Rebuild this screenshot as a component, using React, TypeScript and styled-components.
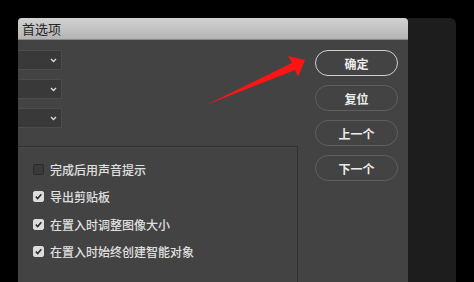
import React from 'react';
import styled, { createGlobalStyle } from 'styled-components';

const GlobalStyle = createGlobalStyle`
  html, body {
    margin: 0;
    padding: 0;
    background: #000;
  }
  body {
    font-family: "Noto Sans CJK SC", "Noto Sans", sans-serif;
  }
`;

const Screen = styled.div`
  position: relative;
  width: 474px;
  height: 282px;
  background: #000;
  display: flex;
  align-items: stretch;
  padding: 18px 0 0 18px;
  box-sizing: border-box;
  overflow: hidden;
`;

const Window = styled.div`
  width: 390px;
  display: flex;
  flex-direction: column;
  background: #434343;
  border-radius: 4px 4px 0 0;
  overflow: hidden;
`;

const Backdrop = styled.div`
  width: 48px;
  background: #1d1d1d;
  border-radius: 0 6px 0 0;
`;

const TitleBar = styled.div`
  height: 22px;
  flex: none;
  display: flex;
  align-items: center;
  padding-left: 4px;
  background: linear-gradient(#d2d2d2, #b4b4b4);
  border-bottom: 1px solid #8a8a8a;
  color: #262626;
  font-size: 13px;
  box-sizing: border-box;
`;

const Body = styled.div`
  flex: 1;
  display: flex;
`;

const LeftColumn = styled.div`
  width: 280px;
  display: flex;
  flex-direction: column;
  padding-top: 10px;
`;

const Dropdown = styled.div`
  width: 44px;
  height: 20px;
  margin-bottom: 9px;
  background: #393939;
  border: 1px solid #4b4b4b;
  border-left: none;
  box-sizing: border-box;
  display: flex;
  align-items: center;
  justify-content: flex-end;
  padding-right: 4px;
`;

const GroupBox = styled.div`
  flex: 1;
  margin-top: 9px;
  border-top: 1px solid #303030;
  border-right: 1px solid #303030;
  box-shadow: inset 0 1px 0 #4a4a4a;
  display: flex;
  flex-direction: column;
  gap: 7.5px;
  padding: 12px 0 0 15px;
`;

const Row = styled.label`
  height: 20px;
  display: flex;
  align-items: center;
  gap: 6px;
  color: #e0e0e0;
  font-size: 12px;
  font-weight: 500;
`;

const Box = styled.span<{ $checked?: boolean }>`
  width: 11px;
  height: 11px;
  border-radius: 2px;
  box-sizing: border-box;
  display: flex;
  align-items: center;
  justify-content: center;
  background: ${({ $checked }) => ($checked ? '#dcdcdc' : '#3a3a3a')};
  border: 1px solid ${({ $checked }) => ($checked ? '#dcdcdc' : '#2c2c2c')};
`;

const RightColumn = styled.div`
  flex: 1;
  display: flex;
  flex-direction: column;
  gap: 9px;
  padding: 10px 10px 0 17px;
`;

const Button = styled.div<{ $primary?: boolean }>`
  height: 26px;
  border-radius: 13px;
  box-sizing: border-box;
  border: ${({ $primary }) => ($primary ? '1.5px solid #d0d0d0' : '1.5px solid #5f5f5f')};
  display: flex;
  align-items: center;
  justify-content: center;
  color: #ececec;
  font-size: 12px;
  font-weight: 700;
`;

const Arrow = styled.svg`
  position: absolute;
  left: 0;
  top: 0;
  pointer-events: none;
`;

const Chevron = () => (
  <svg width="7" height="5" viewBox="0 0 7 5">
    <path d="M1 1 L3.5 3.5 L6 1" stroke="#d8d8d8" strokeWidth="1.4" fill="none" />
  </svg>
);

const Check = () => (
  <svg width="9" height="9" viewBox="0 0 9 9">
    <path d="M1.8 4.6 L3.7 6.5 L7.3 2.2" stroke="#2e2e2e" strokeWidth="1.6" fill="none" />
  </svg>
);

const options = [
  { label: '完成后用声音提示', checked: false },
  { label: '导出剪贴板', checked: true },
  { label: '在置入时调整图像大小', checked: true },
  { label: '在置入时始终创建智能对象', checked: true },
];

export default function App() {
  return (
    <>
      <GlobalStyle />
      <Screen>
        <Window>
          <TitleBar>首选项</TitleBar>
          <Body>
            <LeftColumn>
              <Dropdown><Chevron /></Dropdown>
              <Dropdown><Chevron /></Dropdown>
              <Dropdown><Chevron /></Dropdown>
              <GroupBox>
                {options.map((o) => (
                  <Row key={o.label}>
                    <Box $checked={o.checked}>{o.checked && <Check />}</Box>
                    {o.label}
                  </Row>
                ))}
              </GroupBox>
            </LeftColumn>
            <RightColumn>
              <Button $primary>确定</Button>
              <Button>复位</Button>
              <Button>上一个</Button>
              <Button>下一个</Button>
            </RightColumn>
          </Body>
        </Window>
        <Backdrop />
        <Arrow width="474" height="282" viewBox="0 0 474 282">
          <polygon
            points="206,105 292,63 288,56 305,60 298,77 295,70"
            fill="#ff1414"
          />
        </Arrow>
      </Screen>
    </>
  );
}
